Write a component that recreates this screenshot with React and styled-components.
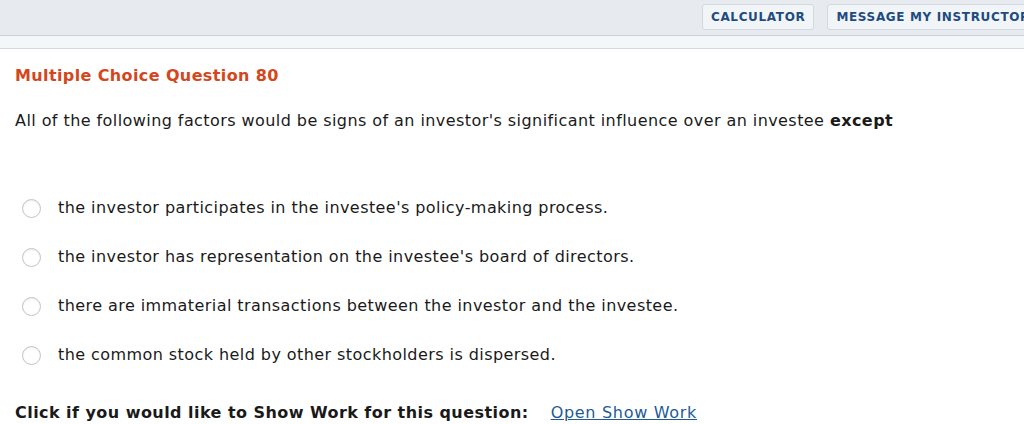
import React from "react"
import styled, { createGlobalStyle } from "styled-components"

const GlobalStyle = createGlobalStyle`
  html, body {
    margin: 0;
    padding: 0;
    background: #ffffff;
    overflow: hidden;
  }
  body {
    font-family: "DejaVu Sans", Verdana, sans-serif;
    color: #1a1a1a;
  }
`

const TopBar = styled.div`
  height: 36px;
  background: #e7ebef;
  border-bottom: 1px solid #c9d0d9;
  display: flex;
  justify-content: flex-end;
  align-items: flex-start;
  gap: 13px;
  padding-top: 4px;
  box-sizing: border-box;
  white-space: nowrap;
  overflow: hidden;
`

const ToolButton = styled.button`
  height: 26px;
  padding: 0 8px;
  background: #f2f5f8;
  border: 1px solid #d3d9e1;
  border-radius: 3px;
  color: #214b7f;
  font-family: "DejaVu Sans", Verdana, sans-serif;
  font-weight: bold;
  font-size: 12px;
  letter-spacing: 0.65px;
  flex-shrink: 0;
  margin-right: ${(p) => p.$offset || 0}px;
`

const SubBar = styled.div`
  height: 12px;
  background: #f4f7fa;
  border-bottom: 1px solid #d2d8e2;
`

const Content = styled.div`
  padding: 17px 15px 0;
  font-size: 16px;
  letter-spacing: 0.43px;
`

const Title = styled.h2`
  margin: 0;
  color: #d4461c;
  font-size: 16px;
  letter-spacing: 0.38px;
  font-weight: bold;
  line-height: 20px;
`

const Prompt = styled.p`
  margin: 25px 0 0;
  line-height: 20px;
`

const Options = styled.ul`
  list-style: none;
  margin: 67px 0 0;
  padding: 0;
  display: flex;
  flex-direction: column;
  gap: 29px;
`

const Option = styled.li`
  display: flex;
  align-items: center;
  gap: 17px;
  line-height: 20px;
  padding-left: 7px;
`

const Radio = styled.span`
  width: 17px;
  height: 17px;
  border-radius: 50%;
  border: 1px solid #c4c4c4;
  background: #fff;
  box-shadow: inset 0 1px 2px rgba(0, 0, 0, 0.08);
  flex-shrink: 0;
`

const Footer = styled.div`
  margin-top: 38px;
  display: flex;
  align-items: baseline;
  gap: 22px;
  line-height: 20px;
`

const FooterLabel = styled.span`
  font-weight: bold;
  letter-spacing: 0.45px;
`

const FooterLink = styled.a`
  color: #1e5b96;
  text-decoration: underline;
  letter-spacing: 0.7px;
`

const options = [
  "the investor participates in the investee's policy-making process.",
  "the investor has representation on the investee's board of directors.",
  "there are immaterial transactions between the investor and the investee.",
  "the common stock held by other stockholders is dispersed.",
]

export default function App() {
  return (
    <>
      <GlobalStyle />
      <TopBar>
        <ToolButton>CALCULATOR</ToolButton>
        <ToolButton $offset={-15}>MESSAGE MY INSTRUCTOR</ToolButton>
      </TopBar>
      <SubBar />
      <Content>
        <Title>Multiple Choice Question 80</Title>
        <Prompt>
          All of the following factors would be signs of an investor's
          significant influence over an investee <b>except</b>
        </Prompt>
        <Options>
          {options.map((text) => (
            <Option key={text}>
              <Radio />
              {text}
            </Option>
          ))}
        </Options>
        <Footer>
          <FooterLabel>
            Click if you would like to Show Work for this question:
          </FooterLabel>
          <FooterLink href="#">Open Show Work</FooterLink>
        </Footer>
      </Content>
    </>
  )
}
